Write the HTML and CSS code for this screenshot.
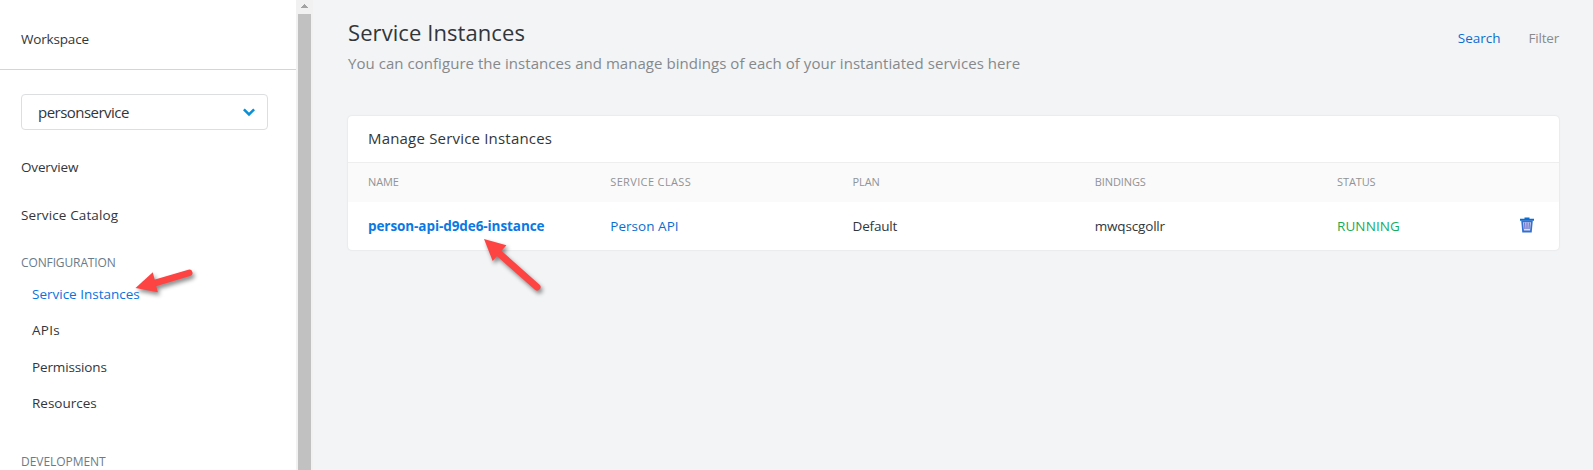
FILE: index.html
```html
<!DOCTYPE html>
<html lang="en">
<head>
<meta charset="utf-8">
<title>Service Instances</title>
<link rel="stylesheet" href="styles.css">
</head>
<body>
<div class="app">
  <nav class="sidebar">
    <a class="workspace">Workspace</a>
    <div class="select">
      <span class="select-value">personservice</span>
      <svg class="chevron" width="12" height="9" viewBox="0 0 12 9"><path d="M0.9 1.4 L6 6.5 L11.1 1.4" fill="none" stroke="#0a8fd6" stroke-width="2.5"/></svg>
    </div>
    <a class="link">Overview</a>
    <a class="link catalog">Service Catalog</a>
    <div class="group">CONFIGURATION</div>
    <a class="sublink active">Service Instances</a>
    <a class="sublink apis">APIs</a>
    <a class="sublink permissions">Permissions</a>
    <a class="sublink">Resources</a>
    <div class="group development">DEVELOPMENT</div>
  </nav>
  <div class="scrollbar">
    <svg class="scroll-up" width="7" height="4" viewBox="0 0 7 4" shape-rendering="crispEdges"><path d="M3 0h1v1h1v1h1v1h1v1H0V3h1V2h1V1h1z" fill="#a3a3a3"/></svg>
    <div class="thumb"></div>
  </div>
  <main class="main">
    <header class="page-head">
      <div>
        <h1 class="title">Service Instances</h1>
        <p class="subtitle">You can configure the instances and manage bindings of each of your instantiated services here</p>
      </div>
      <div class="actions"><a class="search">Search</a><a class="filter">Filter</a></div>
    </header>
    <section class="card">
      <h2 class="card-title">Manage Service Instances</h2>
      <div class="row head"><span>NAME</span><span class="wide">SERVICE CLASS</span><span>PLAN</span><span>BINDINGS</span><span>STATUS</span></div>
      <div class="row">
        <a class="name">person-api-d9de6-instance</a>
        <a class="class">Person API</a>
        <span class="plan">Default</span>
        <span class="binding">mwqscgollr</span>
        <span class="status">RUNNING</span>
        <svg class="trash" width="14" height="16" viewBox="0 0 14 16"><path d="M4.5 0.4h5v1.4H14v2H0v-2h4.5z" fill="#0a6ed1"/><path d="M1.2 3.6h11.6L11.7 15.4H2.3z" fill="#3470cf"/><path d="M3.1 5.2h7.8l-.8 8.4H3.9z" fill="#dcdcf6"/><path d="M4.7 5.5l.3 6.5M7 5.5V12M9.3 5.5L9 12" stroke="#6068c8" stroke-width="1.2"/></svg>
      </div>
    </section>
  </main>
  <svg class="arrow arrow-nav" width="70" height="40" viewBox="130 262 70 40"><path d="M150 284.5L189.2 272.9" stroke="#fe4343" stroke-width="6.6" stroke-linecap="round"/><path d="M135.5 288L152.8 272.2L157.8 292.2z" fill="#fe4343"/></svg>
  <svg class="arrow arrow-name" width="70" height="65" viewBox="478 234 70 65"><path d="M497 251.5L537 287" stroke="#fe4343" stroke-width="7" stroke-linecap="round"/><path d="M484 239L506.4 245.3L492.7 261z" fill="#fe4343"/></svg>
</div>
</body>
</html>
```

FILE: styles.css
```css
* { box-sizing: border-box; }
body { margin: 0; font-family: "Open Sans", "Noto Sans", sans-serif; font-size: 13.5px; color: #32363a; background: #f3f4f6; }
h1, h2, p { margin: 0; font-weight: 400; }
.app { position: relative; display: flex; height: 470px; overflow: hidden; white-space: nowrap; }

.sidebar { width: 296px; background: #fff; flex: none; }
.workspace { display: flex; align-items: center; height: 70px; padding: 9px 0 0 21px; border-bottom: 1px solid #d3d5d6; letter-spacing: -.18px; }
.select { display: flex; align-items: center; justify-content: space-between; width: 247px; height: 36px; margin: 24px 0 13px 21px; padding: 0 12px 0 16px; border: 1px solid #dcdedf; border-radius: 4px; }
.select-value { font-size: 15px; letter-spacing: -.52px; padding-bottom: 1px; }
.chevron { margin-top: 1px; }
.link { display: flex; align-items: center; height: 48px; padding-left: 21px; letter-spacing: -.15px; }
.catalog { letter-spacing: .12px; }
.group { display: flex; align-items: center; height: 36.8px; padding: 10px 0 0 21px; font-size: 12px; color: #6a7b88; letter-spacing: -.12px; }
.sublink { display: flex; align-items: center; height: 36.4px; padding-left: 32px; }
.permissions { letter-spacing: -.14px; }
.apis { letter-spacing: .3px; }
.active { color: #0a73e0; letter-spacing: 0; }
.development { margin-top: 16.6px; letter-spacing: -.05px; }

.scrollbar { width: 17px; flex: none; display: flex; flex-direction: column; align-items: center; background: #f1f1f1; padding: 4px 2px 0; }
.scroll-up { flex: none; margin-bottom: 6px; }
.thumb { flex: 1; width: 13px; background: #c1c1c1; }

.main { flex: 1; padding: 16px 34px 0 35px; }
.page-head { display: flex; justify-content: space-between; height: 100px; }
.title { font-size: 22px; line-height: 32px; letter-spacing: .08px; }
.subtitle { font-size: 15px; line-height: 28px; padding-top: 1px; color: #85898c; letter-spacing: .045px; }
.actions { display: flex; gap: 28px; padding-top: 12px; line-height: 20px; }
.search { color: #0a6ed1; }
.filter { color: #888b8e; letter-spacing: -.2px; }

.card { height: 134px; background: #fff; border-radius: 4px; box-shadow: 0 0 2px rgba(0, 0, 0, .12); overflow: hidden; }
.card-title { height: 46px; padding-left: 20px; font-size: 15px; line-height: 45px; letter-spacing: .19px; }
.row { display: grid; grid-template-columns: repeat(4, 242.25px) 183px auto; align-items: center; justify-content: start; height: 48px; padding-left: 20px; }
.head { height: 40px; padding-bottom: 2px; background: #fafafa; border-top: 1px solid #eeeeef; font-size: 11px; color: #919395; letter-spacing: -.1px; }
.wide { letter-spacing: .36px; }
.name { font-weight: 700; color: #0a78e4; letter-spacing: -.08px; }
.class { color: #0a6ed1; letter-spacing: .04px; }
.plan, .binding { letter-spacing: -.17px; }
.status { color: #17ab5b; letter-spacing: .1px; }
.trash { margin-top: -2px; }

.arrow { position: absolute; filter: drop-shadow(2px 3px 2px rgba(0, 0, 0, .45)); }
.arrow-nav { left: 130px; top: 262px; }
.arrow-name { left: 478px; top: 234px; }
```
